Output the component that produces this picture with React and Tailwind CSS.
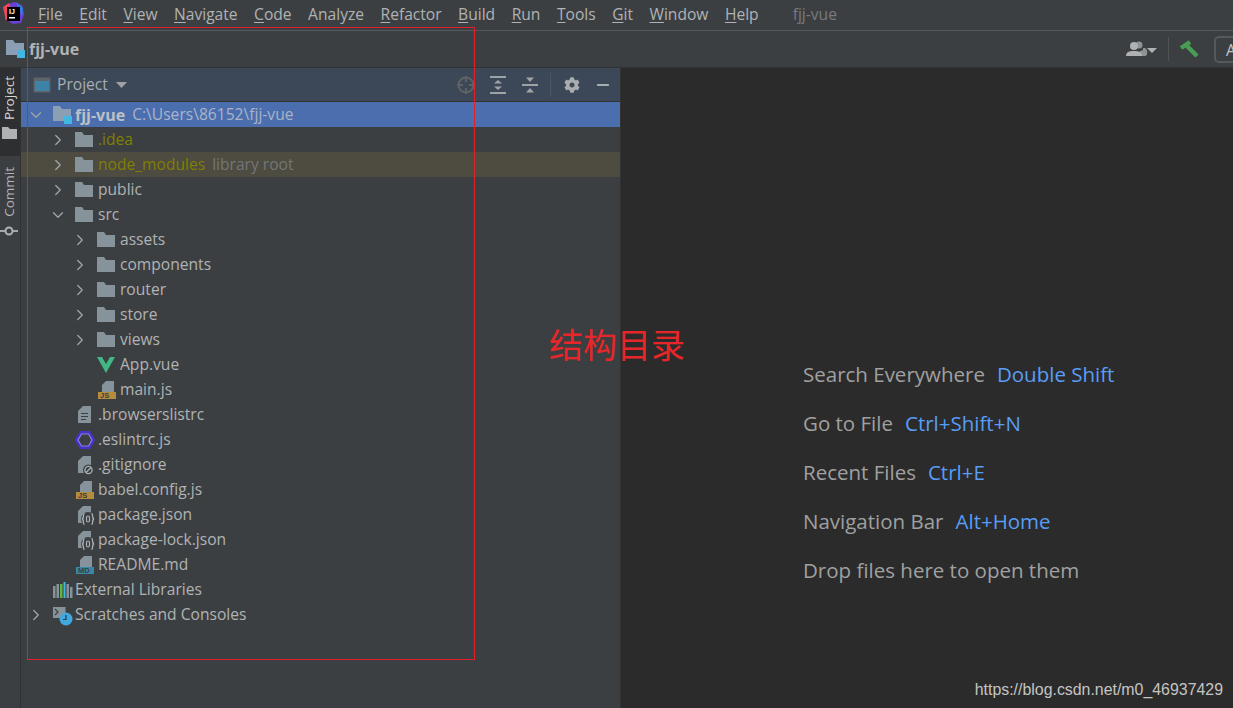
import React from "react";
import { ChevronDown, ChevronRight, Minus } from "lucide-react";
import { FaCog } from "react-icons/fa";

const menus = [
  ["F", "ile"],
  ["E", "dit"],
  ["V", "iew"],
  ["N", "avigate"],
  ["C", "ode"],
  ["", "Analyze"],
  ["R", "efactor"],
  ["B", "uild"],
  ["R", "un"],
  ["T", "ools"],
  ["G", "it"],
  ["W", "indow"],
  ["H", "elp"],
];

const Folder = () => (
  <svg width="18" height="15" viewBox="0 0 18 15" className="shrink-0">
    <path d="M0 0h7l2 3h9v12H0z" fill="#87939a" />
  </svg>
);

const ProjectFolder = () => (
  <svg width="20" height="18" viewBox="0 0 20 18" className="shrink-0">
    <path d="M0 0h7l2 3h9v12H0z" fill="#8a9fb3" />
    <rect x="11" y="10" width="8" height="8" fill="#40b6e0" />
  </svg>
);

const FileBase = ({ children }) => (
  <svg width="20" height="20" viewBox="0 0 20 20" className="shrink-0">
    <path d="M8 1h8v17H3V6z" fill="#87939a" />
    {children}
  </svg>
);

const TextFile = () => (
  <FileBase>
    <path d="M6 8.500h7M6 11.500h7M6 14.500h5" stroke="#3c3f41" strokeWidth="1.200" />
  </FileBase>
);

const Badge = ({ label, color }) => (
  <svg width="20" height="20" viewBox="0 0 20 20" className="shrink-0">
    <path d="M9 1h8v11H5V5z" fill="#87939a" />
    <rect x="1" y="12" width="18" height="7" fill={color} />
    <text x="3" y="18.400" fontSize="7.500" fontWeight="700" fill="#3c3f41" fontFamily="Liberation Sans, sans-serif">
      {label}
    </text>
  </svg>
);

const Vue = () => (
  <svg width="18" height="16" viewBox="0 0 18 16" className="shrink-0">
    <path d="M0 0h18L9 16z" fill="#41b883" />
    <path d="M5 0h8L9 7z" fill="#3c3f41" />
  </svg>
);

const Eslint = () => (
  <svg width="20" height="20" viewBox="0 0 20 20" className="shrink-0">
    <path d="M6 2.500h8l4.500 7.500-4.500 7.500H6L1.500 10z" fill="none" stroke="#4b32c3" strokeWidth="3.200" />
    <path d="M6.500 4h7l3.500 6-3.500 6h-7L3 10z" fill="none" stroke="#8080f2" strokeWidth="1.200" />
  </svg>
);

const GitIgnore = () => (
  <FileBase>
    <circle cx="13.500" cy="15" r="5.500" fill="#3c3f41" />
    <circle cx="13.500" cy="15" r="3.600" fill="none" stroke="#a9b1b6" strokeWidth="1.300" />
    <path d="M11 17.500l5-5" stroke="#a9b1b6" strokeWidth="1.300" />
  </FileBase>
);

const Json = () => (
  <FileBase>
    <circle cx="13" cy="14" r="7" fill="#3c3f41" />
    <path
      d="M9.500 8.500c-2 0 0 5-2.500 5.500 2.500 .5 .5 5.500 2.500 5.500M16.500 8.500c2 0 0 5 2.500 5.500-2.500 .5-.5 5.500-2.500 5.500"
      fill="none"
      stroke="#a9b1b6"
      strokeWidth="1.300"
    />
    <rect x="11.500" y="11" width="3" height="6" rx="1.500" fill="none" stroke="#a9b1b6" strokeWidth="1.200" />
  </FileBase>
);

const Libraries = () => (
  <svg width="20" height="16" viewBox="0 0 20 16" className="shrink-0">
    <rect x="0" y="4" width="2.500" height="12" fill="#87939a" />
    <rect x="3.500" y="2" width="2.500" height="14" fill="#87939a" />
    <rect x="7" y="2" width="2.500" height="14" fill="#62b543" />
    <rect x="10.500" y="0" width="2" height="16" fill="#40b6e0" />
    <rect x="13.500" y="2" width="2.500" height="14" fill="#87939a" />
    <rect x="17" y="5" width="2.500" height="11" fill="#87939a" />
  </svg>
);

const Scratches = () => (
  <svg width="22" height="22" viewBox="0 0 22 22" className="shrink-0">
    <rect x="0" y="3" width="12.500" height="11" fill="#87939a" />
    <path d="M2 5l3 3-3 3" fill="none" stroke="#3c3f41" strokeWidth="1.200" />
    <circle cx="13" cy="15" r="6.500" fill="#40a9e0" />
    <path d="M13 11v4.500h-3" fill="none" stroke="#2b3a44" strokeWidth="1.200" />
  </svg>
);

const rows = [
  { level: 1, arrow: "right", icon: <Folder />, name: ".idea", color: "text-[#808000]" },
  { level: 1, arrow: "right", icon: <Folder />, name: "node_modules", color: "text-[#808000]", hint: "library root", bg: "bg-[#4e4b41]" },
  { level: 1, arrow: "right", icon: <Folder />, name: "public" },
  { level: 1, arrow: "down", icon: <Folder />, name: "src" },
  { level: 2, arrow: "right", icon: <Folder />, name: "assets" },
  { level: 2, arrow: "right", icon: <Folder />, name: "components" },
  { level: 2, arrow: "right", icon: <Folder />, name: "router" },
  { level: 2, arrow: "right", icon: <Folder />, name: "store" },
  { level: 2, arrow: "right", icon: <Folder />, name: "views" },
  { level: 2, icon: <Vue />, name: "App.vue" },
  { level: 2, icon: <Badge label="JS" color="#b58b3c" />, name: "main.js" },
  { level: 1, icon: <TextFile />, name: ".browserslistrc" },
  { level: 1, icon: <Eslint />, name: ".eslintrc.js" },
  { level: 1, icon: <GitIgnore />, name: ".gitignore" },
  { level: 1, icon: <Badge label="JS" color="#b58b3c" />, name: "babel.config.js" },
  { level: 1, icon: <Json />, name: "package.json" },
  { level: 1, icon: <Json />, name: "package-lock.json" },
  { level: 1, icon: <Badge label="MD" color="#3a87a8" />, name: "README.md" },
  { level: 0, icon: <Libraries />, name: "External Libraries" },
  { level: 0, arrow: "right", icon: <Scratches />, name: "Scratches and Consoles" },
];

// indent of the arrow column per tree level
const indents = ["pl-[6px]", "pl-[28px]", "pl-[50px]"];

const Arrow = ({ dir }) => (
  <span className="w-[26px] shrink-0 flex items-center text-[#a0a5a8]">
    {dir === "right" && <ChevronRight size={18} strokeWidth={1.7} />}
    {dir === "down" && <ChevronDown size={18} strokeWidth={1.7} />}
  </span>
);

const Row = ({ row }) => (
  <div className={`h-[25px] flex items-center ${indents[row.level]} ${row.bg || ""}`}>
    <Arrow dir={row.arrow} />
    <span className={`${row.level === 0 ? "w-[22px]" : "w-[23px]"} shrink-0 flex items-center`}>{row.icon}</span>
    <span className={`${row.color || "text-[#b0b3b5]"} whitespace-nowrap`}>{row.name}</span>
    {row.hint && <span className="ml-[7px] text-[#737678]">{row.hint}</span>}
  </div>
);

const hints = [
  ["Search Everywhere", "Double Shift"],
  ["Go to File", "Ctrl+Shift+N"],
  ["Recent Files", "Ctrl+E"],
  ["Navigation Bar", "Alt+Home"],
  ["Drop files here to open them", ""],
];

const App = () => {
  return (
    <div className="relative w-[1233px] h-[708px] overflow-hidden bg-[#3c3f41] text-[15.6px] text-[#b0b3b5] font-['Open_Sans','Noto_Sans',sans-serif]">
      {/* menu bar */}
      <div className="h-[31px] flex items-center border-b border-[#55585a] pl-[2px]">
        <svg width="22" height="22" viewBox="0 0 22 22" className="shrink-0 mb-[4px]">
          <path d="M4 3l8-3 8 3 2 9-3 9-8 1-8-5z" fill="#6b3fd4" />
          <path d="M1 5l6-4 3 9-6 9z" fill="#f0455d" />
          <path d="M14 0l7 6-1 9z" fill="#2f7fe0" />
          <rect x="5" y="5" width="13" height="14" fill="#000" />
          <text x="7" y="12" fontSize="7" fontWeight="700" fill="#fff" fontFamily="Liberation Sans, sans-serif">IJ</text>
          <rect x="7" y="15" width="6" height="1.500" fill="#fff" />
        </svg>
        <div className="ml-[14px] flex gap-[16.500px]">
          {menus.map(([u, rest], i) => (
            <span key={i} className="whitespace-nowrap">
              <span className="underline underline-offset-2">{u}</span>
              {rest}
            </span>
          ))}
        </div>
        <span className="ml-[34px] text-[#787a7c]">fjj-vue</span>
      </div>

      {/* navigation bar */}
      <div className="h-[37px] flex items-center pl-[6px] border-b border-[#323232]">
        <ProjectFolder />
        <span className="ml-[3px] font-bold text-[16px]">fjj-vue</span>
        <div className="ml-auto flex items-center">
          <svg width="34" height="18" viewBox="0 0 34 18">
            <circle cx="14" cy="5" r="3.500" fill="#8f9395" />
            <path d="M13 16c0-4 2-5 5-6l0-2h2c3 1 3 8 0 8z" fill="#8f9395" />
            <circle cx="9" cy="6" r="4" fill="#afb1b3" />
            <path d="M1 16c0-4 3-5 8-5s8 1 8 5z" fill="#afb1b3" />
            <path d="M22 8h10l-5 5z" fill="#afb1b3" />
          </svg>
          <span className="ml-[9px] w-px h-[24px] bg-[#505254]" />
          <svg width="20" height="18" viewBox="0 0 20 18" className="ml-[10px]">
            <path d="M2 8L11 2" stroke="#499c54" strokeWidth="4.500" fill="none" />
            <path d="M7 5l11 11" stroke="#499c54" strokeWidth="4.500" fill="none" />
          </svg>
          <div className="ml-[15px] w-[19px] h-[27px] rounded-l-[5px] border-2 border-[#565859] border-r-0 pl-[10px] text-[#c0c4c8] leading-[24px]">
            A
          </div>
        </div>
      </div>

      {/* main area */}
      <div className="h-[640px] flex">
        {/* tool window stripe */}
        <div className="w-[21px] shrink-0 border-r border-[#323232] flex flex-col text-[13.500px]">
          <div className="h-[88px] bg-[#2d2f30] flex flex-col items-center pt-[8px] pr-[2px]">
            <span className="[writing-mode:vertical-rl] rotate-180 leading-[19px] text-[#d8d8d8]">Project</span>
            <svg width="15" height="12" viewBox="0 0 15 12" className="mt-[7px]">
              <path d="M0 0h6l2 2h7v10H0z" fill="#afb1b3" />
            </svg>
          </div>
          <div className="flex flex-col items-center pt-[11px] pr-[2px]">
            <span className="[writing-mode:vertical-rl] rotate-180 leading-[19px]">Commit</span>
            <svg width="18" height="10" viewBox="0 0 18 10" className="mt-[9px]">
              <path d="M0 5h18" stroke="#afb1b3" strokeWidth="1.800" />
              <circle cx="9" cy="5" r="3.500" fill="#3c3f41" stroke="#afb1b3" strokeWidth="2" />
            </svg>
          </div>
        </div>

        {/* project panel */}
        <div className="w-[599px] shrink-0">
          <div className="h-[34px] flex items-center bg-[#3c4857] border-b border-[#323232] pl-[12px] pr-[8px]">
            <svg width="18" height="16" viewBox="0 0 18 16" className="shrink-0">
              <rect x="0.500" y="0.500" width="17" height="15" fill="#5f6468" />
              <rect x="2" y="4" width="14" height="10" fill="#3d83a8" />
            </svg>
            <span className="ml-[6px] text-[#a9adb0]">Project</span>
            <svg width="11" height="6" viewBox="0 0 11 6" className="ml-[8px]">
              <path d="M0 0h11L5.500 6z" fill="#9fa3a6" />
            </svg>
            <div className="ml-auto flex items-center">
              <svg width="20" height="20" viewBox="0 0 20 20">
                <circle cx="10" cy="10" r="7.500" fill="none" stroke="#5f6265" strokeWidth="2" />
                <path d="M10 1v6M10 13v6M1 10h6M13 10h6" stroke="#5f6265" strokeWidth="2" />
              </svg>
              <svg width="16" height="18" viewBox="0 0 16 18" className="ml-[14px]">
                <path d="M0 0h16v2H0zM0 16h16v2H0zM8 4l4 3.500H4zM4 10.500h8L8 14z" fill="#9fa3a6" />
              </svg>
              <svg width="16" height="16" viewBox="0 0 16 16" className="ml-[16px]">
                <path d="M0 7h16v2H0zM4 0.500h8L8 5zM8 11l4 4.500H4z" fill="#9fa3a6" />
              </svg>
              <span className="ml-[12px] w-px h-[24px] bg-[#4c5561]" />
              <FaCog size={16} className="ml-[13px] text-[#a9adb0]" />
              <Minus size={18} strokeWidth={2.400} className="ml-[14px] text-[#a9adb0]" />
            </div>
          </div>

          <div className="h-[25px] flex items-center pl-[6px] bg-[#4b6eaf]">
            <Arrow dir="down" />
            <ProjectFolder />
            <span className="ml-[2px] font-bold text-[16px] text-[#bcc0c4]">fjj-vue</span>
            <span className="ml-[7px] text-[#a9b4c8]">C:\Users\86152\fjj-vue</span>
          </div>
          {rows.map((row) => (
            <Row key={row.name} row={row} />
          ))}
        </div>

        {/* editor empty state */}
        <div className="flex-1 bg-[#2b2b2b] border-l border-[#323232] pl-[182px] pt-[293px] text-[20.500px] text-[#a0a0a0]">
          {hints.map(([label, key]) => (
            <div key={label} className="h-[49px] leading-[27px] whitespace-nowrap">
              {label}
              {key && <span className="ml-[12px] text-[#589df6]">{key}</span>}
            </div>
          ))}
        </div>
      </div>

      {/* red annotation drawn on top of the screenshot */}
      <div className="absolute left-[27px] top-[27px] w-[448px] h-[633px] border border-[#e0202a] pointer-events-none" />
      <div className="absolute left-[549px] top-[321px] text-[34px] leading-[46px] text-[#e8262a] font-['Noto_Sans_CJK_SC',sans-serif]">
        结构目录
      </div>
      <div className="absolute right-[10px] top-[678px] text-[15.900px] text-[#c4c4c4] font-['Liberation_Sans',sans-serif]">
        https://blog.csdn.net/m0_46937429
      </div>
    </div>
  );
};

export default App;
